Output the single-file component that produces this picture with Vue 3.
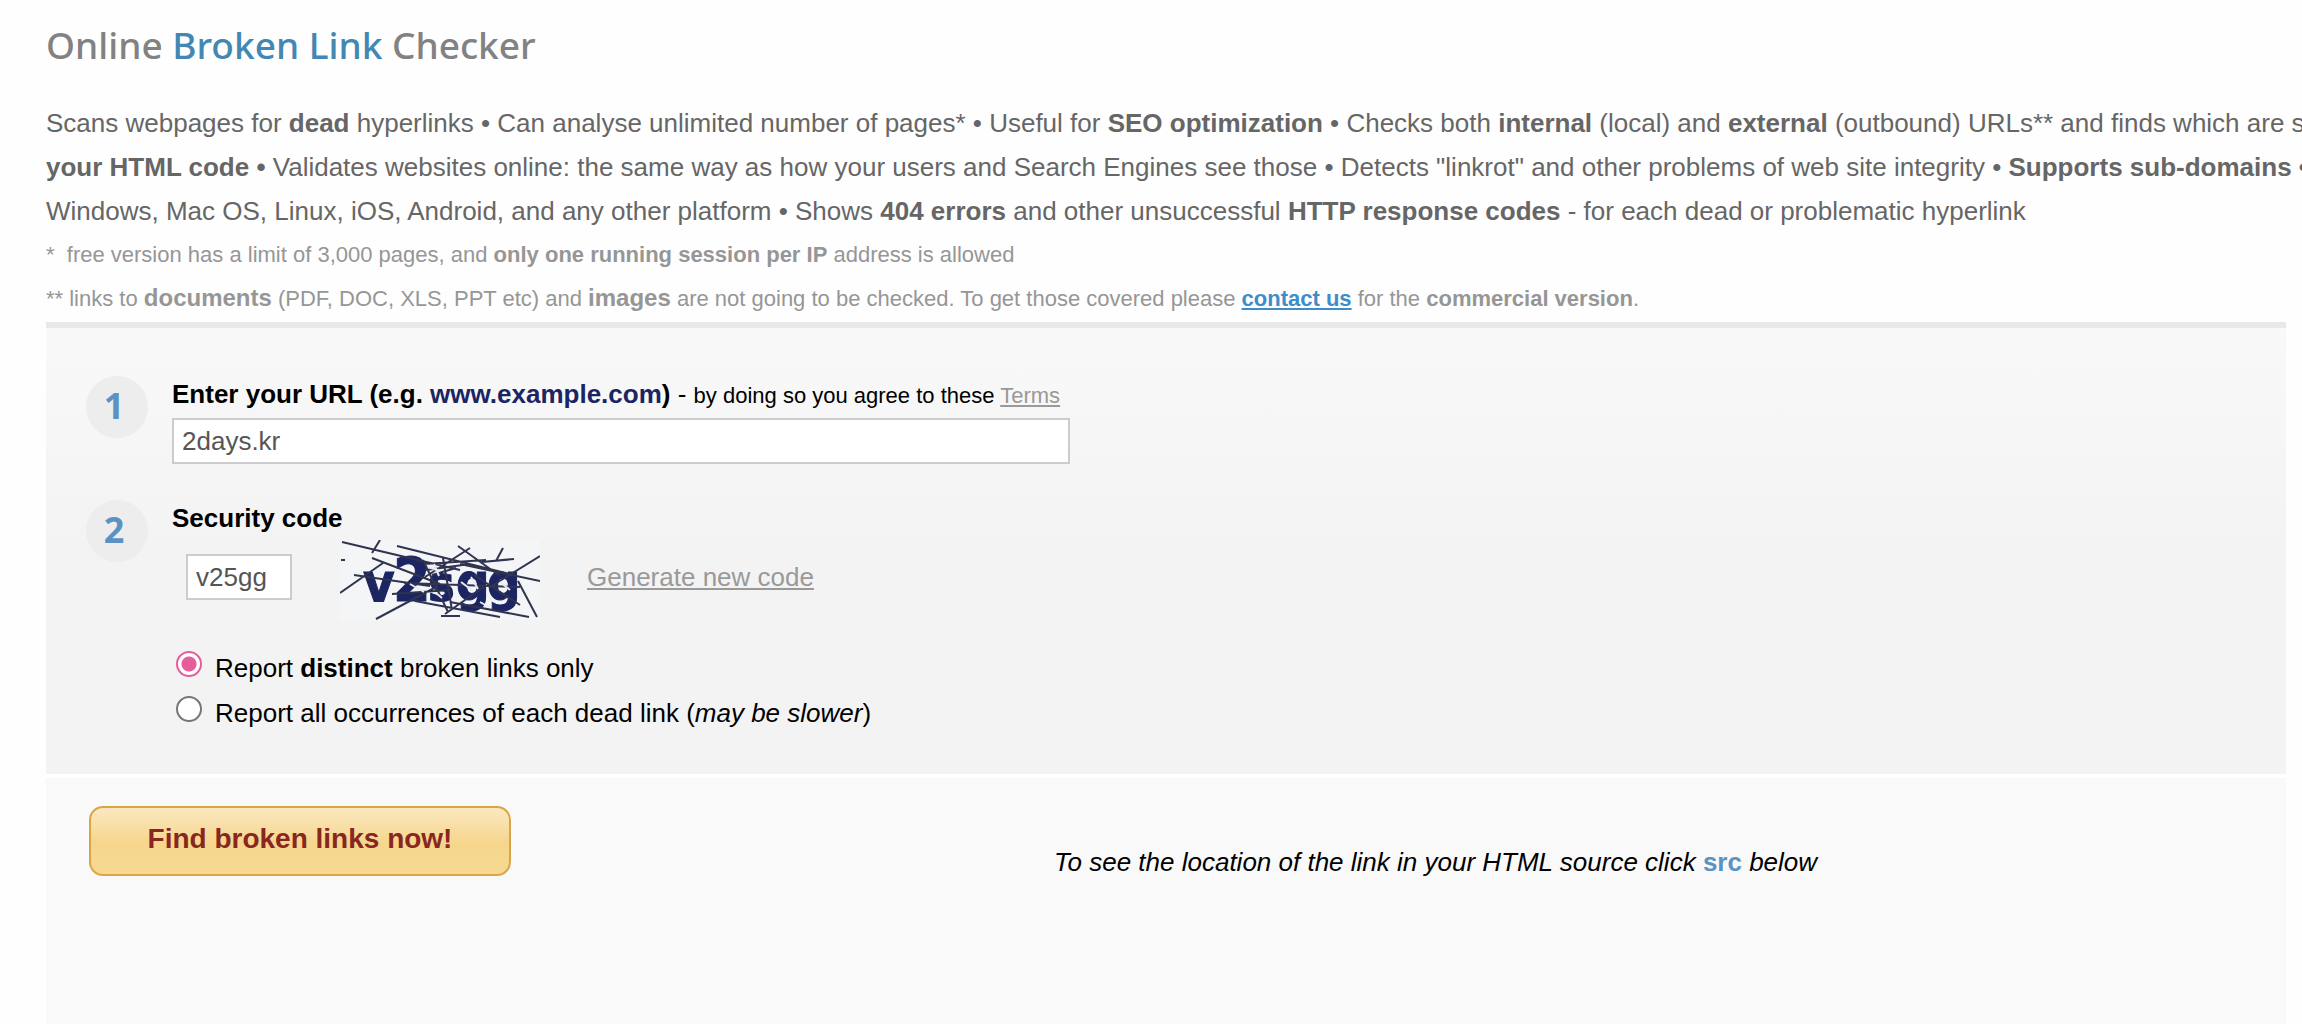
<script setup>
import { ref } from 'vue'

const url = ref('2days.kr')
const code = ref('v25gg')
const mode = ref('distinct')
</script>

<template>
  <main class="page">
    <h1>Online <em>Broken Link</em> Checker</h1>

    <section class="intro">
      <p>Scans webpages for <b>dead</b> hyperlinks • Can analyse unlimited number of pages* • Useful for <b>SEO optimization</b> • Checks both <b>internal</b> (local) and <b>external</b> (outbound) URLs** and finds which are s</p>
      <p><b>your HTML code •</b> Validates websites online: the same way as how your users and Search Engines see those • Detects "linkrot" and other problems of web site integrity • <b>Supports sub-domains •</b></p>
      <p>Windows, Mac OS, Linux, iOS, Android, and any other platform • Shows <b>404 errors</b> and other unsuccessful <b>HTTP response codes</b> - for each dead or problematic hyperlink</p>
      <p class="note">*&nbsp; free version has a limit of 3,000 pages, and <b>only one running session per IP</b> address is allowed</p>
      <p class="note">** links to <b class="kind">documents</b> (PDF, DOC, XLS, PPT etc) and <b class="kind">images</b> are not going to be checked. To get those covered please <a class="contact" href="#">contact us</a> for the <b>commercial version</b>.</p>
    </section>

    <form @submit.prevent>
      <div class="fields">
        <div class="step">
          <span class="num">1</span>
          <div class="body">
            <label class="title" for="url">Enter your URL (e.g. <span class="sample">www.example.com</span>) <span class="dash">-</span> <span class="small">by doing so you agree to these <a href="#">Terms</a></span></label>
            <input id="url" v-model="url" class="box url" type="text">
          </div>
        </div>

        <div class="step">
          <span class="num">2</span>
          <div class="body">
            <label class="title" for="code">Security code</label>
            <div class="security">
              <input id="code" v-model="code" class="box code" type="text">
              <svg class="captcha" viewBox="0 0 200 80" aria-label="Security code image">
                <rect width="200" height="80" fill="#f4f5f7" />
                <g class="letters" fill="#1b2563" stroke="#1b2563" stroke-width="1">
                  <text x="23" y="61" font-size="54">v</text>
                  <text x="53" y="61" font-size="60">2</text>
                  <text x="88" y="61" font-size="50">s</text>
                  <text x="116" y="60" font-size="52">g</text>
                  <text x="147" y="60" font-size="52">g</text>
                </g>
                <g fill="none" stroke="#30344f" stroke-width="2">
                  <path d="M2 2 L120 30 M57 6 L170 34 M40 0 L32 13 M0 53 L43 23 M14 35 L90 46 M32 18 L100 44 M36 79 L98 46 M75 61 L160 77 M118 6 L160 36 M130 8 L85 37 M200 16 L150 47 M120 24 L200 41 M178 41 L197 77 M163 8 L156 21 M142 22 L174 19 M105 74 L145 46 M110 62 L189 77 M64 43 L180 47 M52 54 L110 50 M83 20 L108 72 M103 18 L112 70 M134 35 L180 65 M1 20 H5 M101 76 H120 M84 24 L146 20 M86 30 L130 24 M92 35 L116 28" />
                </g>
                <g fill="none" stroke="#e8eaf5" stroke-width="2">
                  <path d="M88 27 l12 4 m-6 -7 l5 12 M70 44 l14 8 M121 42 l12 9 M131 37 l7 12 M160 42 l10 8 M96 53 l6 5 M140 62 l9 5" />
                </g>
              </svg>
              <a class="regen" href="#">Generate new code</a>
            </div>
            <div class="options">
              <label><input v-model="mode" type="radio" name="mode" value="distinct"><span>Report <b>distinct</b> broken links only</span></label>
              <label><input v-model="mode" type="radio" name="mode" value="all"><span>Report all occurrences of each dead link (<i>may be slower</i>)</span></label>
            </div>
          </div>
        </div>
      </div>

      <div class="actions">
        <button type="submit">Find broken links now!</button>
        <p class="hint">To see the location of the link in your HTML source click <b>src</b> below</p>
      </div>
    </form>
  </main>
</template>

<style>
body {
  margin: 0;
  background: #fefefe;
}
</style>

<style scoped>
.page {
  display: flex;
  flex-direction: column;
  box-sizing: border-box;
  min-height: 100vh;
  padding-left: 46px;
  overflow: hidden;
  font-family: "Liberation Sans", Arial, sans-serif;
  font-size: 26px;
  color: #000;
}
h1 {
  margin: 18px 0 29px;
  font-family: "Noto Sans", sans-serif;
  font-size: 37px;
  font-weight: 500;
  line-height: 54px;
  color: #828282;
}
h1 em {
  font-style: normal;
  color: #4387b3;
}
.intro {
  padding-bottom: 1px;
}
.intro p {
  margin: 0;
  line-height: 44px;
  white-space: nowrap;
  color: #666;
}
.intro .note {
  font-size: 22px;
  color: #969696;
}
.kind {
  font-size: 24px;
  line-height: 24px;
}
.contact {
  font-weight: bold;
  color: #3c8dc9;
}
form {
  display: flex;
  flex: 1;
  flex-direction: column;
  margin-right: 16px;
}
.fields {
  display: flex;
  flex-direction: column;
  gap: 36px;
  padding: 48px 40px 38px;
  border-top: 6px solid #e9e9e9;
  border-bottom: 4px solid #fff;
  background: linear-gradient(#f9f9f9, #f3f3f3 220px);
}
.step {
  display: flex;
  gap: 24px;
}
.num {
  box-sizing: border-box;
  width: 62px;
  height: 62px;
  padding-right: 6px;
  border-radius: 50%;
  background: #ededed;
  font-family: "Open Sans", sans-serif;
  font-size: 36px;
  font-weight: bold;
  line-height: 60px;
  text-align: center;
  color: #5b92c4;
}
.title {
  display: block;
  height: 42px;
  font-weight: bold;
  line-height: 36px;
}
.sample {
  color: #1b2563;
}
.dash {
  font-weight: normal;
}
.small {
  font-size: 22px;
  font-weight: normal;
}
.small a,
.regen {
  color: #999;
}
.box {
  box-sizing: border-box;
  display: block;
  height: 46px;
  padding: 0 8px;
  border: 2px solid #ccc;
  border-radius: 0;
  background: #fff;
  font: inherit;
  color: #555;
}
.url {
  width: 898px;
}
.code {
  width: 106px;
}
.security {
  display: flex;
  align-items: center;
  height: 70px;
  padding-left: 14px;
}
.captcha {
  width: 200px;
  height: 80px;
  margin: 6px 47px 0 48px;
}
.letters {
  font-family: "Liberation Sans Narrow", "DejaVu Sans Condensed", sans-serif;
  font-weight: bold;
}
.options {
  margin-top: 34px;
}
.options label {
  display: flex;
  gap: 13px;
  line-height: 45px;
}
.options input {
  appearance: none;
  box-sizing: border-box;
  width: 26px;
  height: 26px;
  margin: 5px 0 0 4px;
  border: 2px solid #767676;
  border-radius: 50%;
  background: #fff;
}
.options input:checked {
  border-color: #e55e9b;
  background: radial-gradient(circle, #e55e9b 7px, #fff 8px);
}
.actions {
  display: flex;
  flex: 1;
  align-items: flex-start;
  padding: 28px 43px;
  background: #f9f9f9;
}
button {
  width: 422px;
  height: 70px;
  padding: 0 0 4px;
  border: 2px solid #dba545;
  border-radius: 14px;
  background: linear-gradient(#fbe8c0, #f6d68c 55%, #f6d992);
  font: bold 28px "Liberation Sans", Arial, sans-serif;
  color: #8a2622;
}
.hint {
  margin: 34px 0 0 543px;
  line-height: 44px;
  font-style: italic;
}
.hint b {
  font-style: normal;
  color: #5b92c4;
}
</style>
